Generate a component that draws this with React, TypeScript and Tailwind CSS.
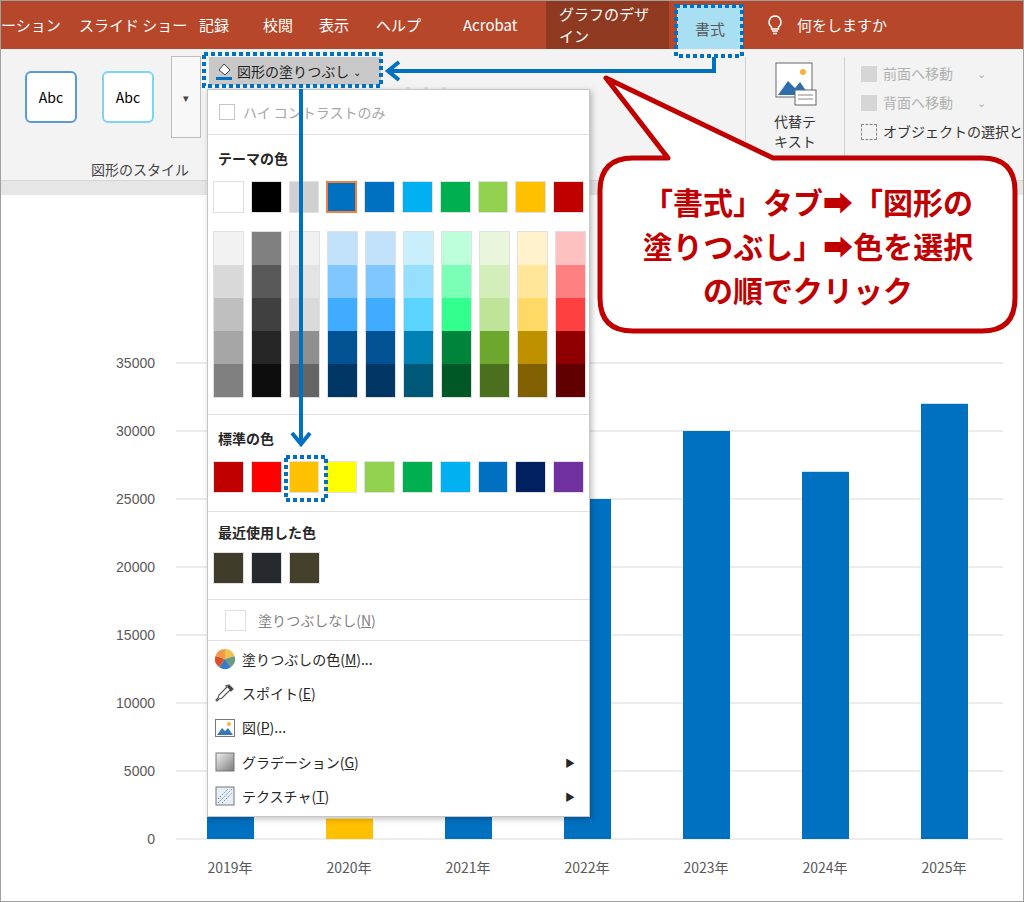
import React from "react";

const JP = { fontFamily: '"Noto Sans CJK JP", "Noto Sans", sans-serif' };

const TOP = ["#ffffff", "#000000", "#d0d0d0", "#0070c0", "#0070c0", "#00b0f0", "#00b050", "#92d050", "#ffc000", "#c00000"];
const SHADES = [
  ["#f2f2f2", "#d9d9d9", "#bfbfbf", "#a6a6a6", "#808080"],
  ["#808080", "#595959", "#404040", "#262626", "#0d0d0d"],
  ["#f0f0f0", "#e4e4e4", "#dadada", "#8f8f8f", "#646464"],
  ["#c2e2fc", "#80c6ff", "#40acff", "#005293", "#003764"],
  ["#c2e2fc", "#80c6ff", "#40acff", "#005293", "#003764"],
  ["#c9effc", "#97e0fd", "#5ad3fe", "#0083b4", "#005878"],
  ["#bdffdb", "#7bffb7", "#33ff8e", "#00843b", "#005827"],
  ["#e9f6dd", "#d3edbb", "#bee49a", "#6ea72d", "#4a6f1e"],
  ["#fff2cc", "#ffe699", "#ffd966", "#bf9000", "#806000"],
  ["#ffc0c0", "#ff8080", "#ff4040", "#900000", "#600000"],
];
const STD = ["#c00000", "#ff0000", "#ffc000", "#ffff00", "#92d050", "#00b050", "#00b0f0", "#0070c0", "#002060", "#7030a0"];
const RECENT = ["#403c2c", "#262a2f", "#45402c"];

const BARS = [
  { year: "2019年", v: 25000, c: "#0070c0" },
  { year: "2020年", v: 1500, c: "#ffc000" },
  { year: "2021年", v: 25000, c: "#0070c0" },
  { year: "2022年", v: 25000, c: "#0070c0" },
  { year: "2023年", v: 30000, c: "#0070c0" },
  { year: "2024年", v: 27000, c: "#0070c0" },
  { year: "2025年", v: 32000, c: "#0070c0" },
];

const TABS = ["ーション", "スライド ショー", "記録", "校閲", "表示", "ヘルプ", "Acrobat"];

function Chart() {
  const y0 = 658; // 838 - 180
  const k = 68 / 5000;
  return (
    <svg width="1024" height="722" className="block">
      {[0, 5000, 10000, 15000, 20000, 25000, 30000, 35000].map((t) => (
        <g key={t}>
          <line x1="175" x2="1002" y1={y0 - t * k} y2={y0 - t * k} stroke="#d9d9d9" />
          <text x="154" y={y0 - t * k + 5} textAnchor="end" fontSize="14" fill="#595959" fontFamily="Liberation Sans, sans-serif">{t}</text>
        </g>
      ))}
      {BARS.map((b, i) => {
        const x = 206 + i * 119;
        return (
          <g key={b.year}>
            <rect x={x} y={y0 - b.v * k} width="47" height={b.v * k} fill={b.c} />
            <text x={x + 23} y={692} textAnchor="middle" fontSize="14" fill="#595959" style={JP}>{b.year}</text>
          </g>
        );
      })}
    </svg>
  );
}

function Sw({ c, cls = "" }: { c: string; cls?: string }) {
  return <div className={`w-[31px] h-[32px] border border-[#e0e0e0] ${cls}`} style={{ background: c }} />;
}

function Menu() {
  return (
    <div className="absolute left-[206px] top-[88px] w-[383px] h-[728px] bg-white border border-[#c6c6c6] shadow-[2px_2px_6px_rgba(0,0,0,0.25)] text-[14px] text-[#262626]" style={JP}>
      <div className="flex items-center gap-2 h-[44px] px-[11px] text-[#a6a6a6]">
        <div className="w-[16px] h-[16px] border border-[#c6c6c6]" />
        <span>ハイ コントラストのみ</span>
      </div>
      <div className="border-t border-[#e1e1e1]" />
      <div className="px-[5px]">
        <div className="font-bold h-[46px] flex items-center pl-[5px]">テーマの色</div>
        <div className="flex gap-[7px]">
          {TOP.map((c, i) => <Sw key={i} c={c} cls={i === 3 ? "!border-2 !border-[#f47f3a]" : ""} />)}
        </div>
        <div className="flex gap-[7px] mt-[18px]">
          {SHADES.map((col, i) => (
            <div key={i} className="flex flex-col border border-[#e0e0e0]">
              {col.map((c, j) => <div key={j} className="w-[29px] h-[33px]" style={{ background: c }} />)}
            </div>
          ))}
        </div>
      </div>
      <div className="border-t border-[#e1e1e1] mt-[16px]" />
      <div className="px-[5px]">
        <div className="font-bold h-[46px] flex items-center pl-[5px]">標準の色</div>
        <div className="flex gap-[7px]">{STD.map((c) => <Sw key={c} c={c} />)}</div>
      </div>
      <div className="border-t border-[#e1e1e1] mt-[18px]" />
      <div className="px-[5px]">
        <div className="font-bold h-[40px] flex items-center pl-[5px]">最近使用した色</div>
        <div className="flex gap-[7px]">{RECENT.map((c, i) => <Sw key={i} c={c} />)}</div>
      </div>
      <div className="border-t border-[#e1e1e1] mt-[15px]" />
      <div className="flex items-center gap-[12px] h-[40px] pl-[17px] text-[#7f7f7f]">
        <div className="w-[21px] h-[21px] border border-[#e0e0e0]" />
        <span>塗りつぶしなし(<u>N</u>)</span>
      </div>
      <div className="border-t border-[#e1e1e1]" />
      <div className="flex flex-col pt-[1px]">
        {[
          { t: <>塗りつぶしの色(<u>M</u>)...</>, icon: "pie", h: 34 },
          { t: <>スポイト(<u>E</u>)</>, icon: "drop", h: 34 },
          { t: <>図(<u>P</u>)...</>, icon: "pic", h: 35 },
          { t: <>グラデーション(<u>G</u>)</>, icon: "grad", h: 34, sub: true },
          { t: <>テクスチャ(<u>T</u>)</>, icon: "tex", h: 34, sub: true },
        ].map((it, i) => (
          <div key={i} className="flex items-center gap-[6px] pl-[6px] pr-[14px]" style={{ height: it.h }}>
            <Icon k={it.icon} />
            <span className="flex-1">{it.t}</span>
            {it.sub && <span className="text-[10px] text-[#262626]">▶</span>}
          </div>
        ))}
      </div>
    </div>
  );
}

function Icon({ k }: { k: string }) {
  if (k === "pie")
    return (
      <svg width="22" height="22" viewBox="0 0 22 22">
        <path d="M11 11 L11 1 A10 10 0 0 1 20.5 8 Z" fill="#f2c04e" />
        <path d="M11 11 L20.5 8 A10 10 0 0 1 17 19 Z" fill="#6c9a7e" />
        <path d="M11 11 L17 19 A10 10 0 0 1 5 19 Z" fill="#3b7bbf" />
        <path d="M11 11 L5 19 A10 10 0 0 1 1.5 8 Z" fill="#d9502b" />
        <path d="M11 11 L1.5 8 A10 10 0 0 1 11 1 Z" fill="#f39a4a" />
      </svg>
    );
  if (k === "drop")
    return (
      <svg width="22" height="22" viewBox="0 0 22 22">
        <path d="M15 3 l4 4 -2 2 -1 -1 -8 8 -3 1 -2 2 -1 -1 2 -2 1 -3 8 -8 -1 -1 z" fill="#fff" stroke="#555" strokeWidth="1.2" />
        <path d="M15 3 l4 4 -2 2 -4 -4 z" fill="#444" />
      </svg>
    );
  if (k === "pic")
    return (
      <svg width="22" height="22" viewBox="0 0 22 22">
        <rect x="1.5" y="2.5" width="19" height="17" fill="#fff" stroke="#777" />
        <circle cx="15" cy="7" r="2" fill="#f2b43c" />
        <path d="M3 18 L8 11 L11 14 L14 11 L19 18 Z" fill="#3a78b5" />
      </svg>
    );
  if (k === "grad")
    return (
      <svg width="22" height="22" viewBox="0 0 22 22">
        <defs>
          <linearGradient id="g1" x1="0" y1="0" x2="1" y2="1">
            <stop offset="0" stopColor="#f2f2f2" />
            <stop offset="1" stopColor="#7a7a7a" />
          </linearGradient>
        </defs>
        <rect x="2" y="2" width="18" height="18" fill="url(#g1)" stroke="#777" />
      </svg>
    );
  return (
    <svg width="22" height="22" viewBox="0 0 22 22">
      <rect x="2" y="2" width="18" height="18" fill="#e8eef5" stroke="#777" />
      <path d="M4 18 L18 4 M8 18 L18 8 M4 14 L14 4" stroke="#4f86c6" strokeDasharray="1.5 1.5" />
    </svg>
  );
}

function Overlay() {
  const blue = "#0070c0";
  return (
    <svg width="1024" height="902" className="absolute inset-0 pointer-events-none">
      <path d="M632 157 L667 157 L605 77 L772 157 L981 157 Q1014 157 1014 190 L1014 297 Q1014 330 981 330 L632 330 Q599 330 599 297 L599 190 Q599 157 632 157 Z" fill="#fff" stroke="#c00000" strokeWidth="5" strokeLinejoin="round" />
      <path d="M713 56 L713 70 L388 70" fill="none" stroke={blue} strokeWidth="4" />
      <path d="M398 61 L387 70 L398 79" fill="none" stroke={blue} strokeWidth="4" />
      <path d="M300 88 L300 442" fill="none" stroke={blue} strokeWidth="4" />
      <path d="M291 432 L300 443 L309 432" fill="none" stroke={blue} strokeWidth="4" />
      <rect x="203" y="53" width="177" height="32" fill="none" stroke={blue} strokeWidth="4" strokeDasharray="4 3" />
      <rect x="675" y="5" width="66" height="50" fill="none" stroke={blue} strokeWidth="4" strokeDasharray="4 3" />
      <rect x="285" y="456" width="40" height="43" fill="none" stroke={blue} strokeWidth="4" strokeDasharray="4 3" />
    </svg>
  );
}

export default function App() {
  return (
    <div className="relative w-[1024px] h-[902px] overflow-hidden bg-white border border-[#a0a0a0]" style={JP}>
      <div className="flex items-center h-[48px] bg-[#b7472a] text-white text-[15px]">
        <div className="flex items-center h-full">
          {TABS.map((t, i) => (
            <span key={t} className={["w-[78px]", "w-[120px]", "w-[64px]", "w-[56px]", "w-[57px]", "w-[87px]", "w-[83px]"][i] + (i === 6 ? " font-['Liberation_Sans']" : "")}>{t}</span>
          ))}
        </div>
        <div className="h-full flex items-center px-[13px] bg-[#8f3a20] w-[123px]">グラフのデザイン</div>
        <div className="w-[8px]" />
        <div className="h-full flex items-center justify-center bg-[#a8dff2] text-[#595959] w-[66px] mt-[8px]">書式</div>
        <svg width="20" height="22" viewBox="0 0 20 22" className="ml-[22px]">
          <path d="M10 2 a6 6 0 0 0 -3.5 10.8 V15 h7 v-2.2 A6 6 0 0 0 10 2 Z M7 17 h6 M8 19.5 h4" fill="none" stroke="#fff" strokeWidth="1.5" />
        </svg>
        <span className="ml-[12px]">何をしますか</span>
      </div>
      <div className="relative h-[132px] bg-[#f3f3f3] border-b border-[#d6d6d6] flex">
        <div className="w-[200px] flex flex-col">
          <div className="flex items-center gap-[25px] pl-[24px] h-[100px]">
            <div className="w-[52px] h-[52px] rounded-[6px] border-2 border-[#5b9bd5] bg-white flex items-center justify-center text-[14px] text-black">Abc</div>
            <div className="w-[52px] h-[52px] rounded-[6px] border-2 border-[#7fd3f7] bg-white flex items-center justify-center text-[14px] text-black">Abc</div>
            <div className="w-[30px] h-[82px] border border-[#bdbdbd] bg-[#f8f8f8] flex items-center justify-center text-[11px] text-[#444] -ml-[8px]">▾</div>
          </div>
          <div className="text-[14px] text-[#444] text-right pr-[12px] mt-[14px]">図形のスタイル</div>
        </div>
        <div className="w-[550px] opacity-40 text-[#bbb] text-[22px] pl-[200px] pt-[28px]">A A A</div>
        <div className="w-[1px] bg-[#d0d0d0] my-[8px]" />
        <div className="w-[100px] flex flex-col items-center pt-[12px] text-[14px] text-[#333] leading-[20px]">
          <svg width="44" height="46" viewBox="0 0 44 46">
            <rect x="3" y="2" width="36" height="34" fill="#fff" stroke="#666" />
            <circle cx="30" cy="11" r="3" fill="#f2b43c" />
            <path d="M5 34 L15 20 L22 27 L27 21 L36 34 Z" fill="#2e6ead" />
            <rect x="22" y="29" width="21" height="15" fill="#fff" stroke="#666" />
            <path d="M25 34 h15 M25 38 h15" stroke="#888" />
          </svg>
          <span className="mt-[4px]">代替テ</span>
          <span>キスト</span>
        </div>
        <div className="w-[1px] bg-[#d0d0d0] my-[8px]" />
        <div className="flex flex-col gap-[8px] pl-[16px] pt-[14px] text-[14px]">
          <div className="flex items-center gap-[6px] text-[#b0b0b0]"><span className="w-[16px] h-[16px] bg-[#d6d6d6]" />前面へ移動<span className="ml-[18px] text-[11px]">⌄</span></div>
          <div className="flex items-center gap-[6px] text-[#b0b0b0]"><span className="w-[16px] h-[16px] bg-[#d6d6d6]" />背面へ移動<span className="ml-[18px] text-[11px]">⌄</span></div>
          <div className="flex items-center gap-[6px] text-[#333] whitespace-nowrap"><span className="w-[16px] h-[16px] border border-[#888] border-dashed" />オブジェクトの選択と</div>
        </div>
      </div>
      <div className="h-[14px] bg-[#e6e6e6]" />
      <div className="absolute left-0 top-[180px]"><Chart /></div>
      <div className="absolute left-[208px] top-[56px] h-[28px] w-[172px] bg-[#c8c8c8] flex items-center gap-[4px] pl-[6px] text-[14px] text-[#222]">
        <svg width="18" height="20" viewBox="0 0 18 20">
          <path d="M4 9 L9 3 L15 9 L10 14 Z" fill="#fff" stroke="#444" />
          <rect x="1" y="16" width="16" height="3" fill="#0070c0" />
        </svg>
        図形の塗りつぶし <span className="text-[10px]">⌄</span>
      </div>
      <Menu />
      <Overlay />
      <div className="absolute left-[600px] top-[178px] w-[414px] text-center text-[#c00000] font-bold text-[30px] leading-[44px]">
        <div>「書式」タブ➡「図形の</div>
        <div>塗りつぶし」➡色を選択</div>
        <div>の順でクリック</div>
      </div>
    </div>
  );
}
